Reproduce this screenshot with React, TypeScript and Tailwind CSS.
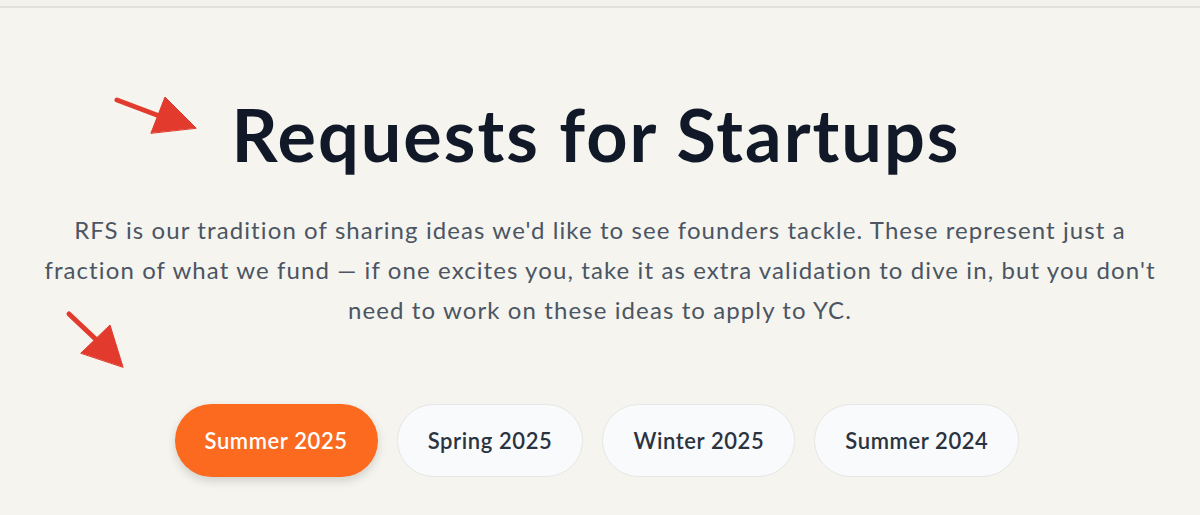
import React from 'react';

const tabs = ['Summer 2025', 'Spring 2025', 'Winter 2025', 'Summer 2024'];

function Arrows() {
  return (
    <svg className="pointer-events-none absolute inset-0" width="1200" height="515" viewBox="0 0 1200 515">
      <g fill="#e23b2e" stroke="#e23b2e" strokeLinecap="round">
        <line x1="117" y1="100" x2="170" y2="120" strokeWidth="5" />
        <polygon points="196,128 165,97 151,133" strokeWidth="1" strokeLinejoin="round" />
        <line x1="69" y1="314" x2="104" y2="347" strokeWidth="5" />
        <polygon points="123,367 110,325 81,353" strokeWidth="1" strokeLinejoin="round" />
      </g>
    </svg>
  );
}

export default function App() {
  return (
    <div className="relative h-[515px] w-[1200px] overflow-hidden bg-[#f5f4ee] font-['Lato',sans-serif]">
      <div className="h-[8px] border-b-2 border-[#e2e1dc] bg-[#f3f2ee]" />
      <div className="flex flex-col items-center">
        <h1 className="mt-[90px] mr-[8px] text-[72px] font-bold leading-none tracking-[2px] text-[#111827]">
          Requests for Startups
        </h1>
        <p className="mt-[40px] w-[1130px] text-center text-[24px] leading-[40px] tracking-[1.1px] text-[#4b5563]">
          RFS is our tradition of sharing ideas we'd like to see founders tackle. These represent just a fraction of what we fund — if one excites you, take it as extra validation to dive in, but you don't need to work on these ideas to apply to YC.
        </p>
        <div className="mt-[74px] mr-[6px] flex gap-[19px]">
          {tabs.map((t, i) => (
            <button
              key={t}
              type="button"
              className={
                i === 0
                  ? 'h-[73px] rounded-full bg-[#fb6a1e] px-[30px] text-[22px] font-semibold tracking-[0.6px] text-white shadow-[0_4px_10px_rgba(0,0,0,0.15)]'
                  : 'h-[73px] rounded-full border border-[#e6e6e4] bg-[#f9fafb] px-[30px] text-[22px] font-semibold tracking-[0.6px] text-[#2b3340]'
              }
            >
              {t}
            </button>
          ))}
        </div>
      </div>
      <Arrows />
    </div>
  );
}
